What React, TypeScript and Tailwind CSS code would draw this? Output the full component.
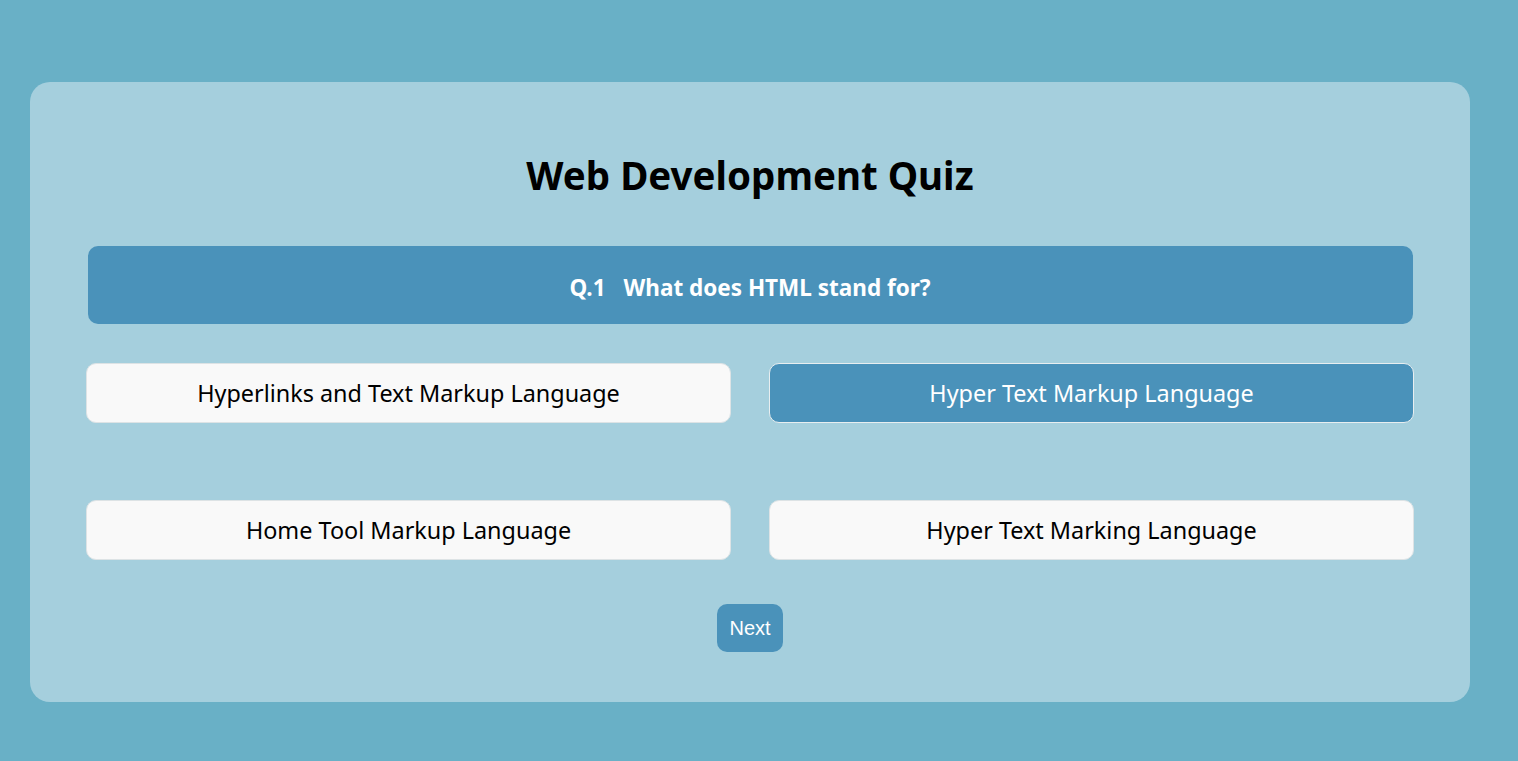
import { useState } from "react";

const options = [
  "Hyperlinks and Text Markup Language",
  "Hyper Text Markup Language",
  "Home Tool Markup Language",
  "Hyper Text Marking Language",
];

export default function App() {
  const [selected, setSelected] = useState(1);

  return (
    <div className="min-h-screen bg-[#69b0c6] pt-[82px] pb-[59px] font-['Noto_Sans',sans-serif]">
      <div className="ml-[30px] w-[1440px] h-[620px] rounded-[20px] bg-[#a5cfdd] px-[56px] pt-[66px] flex flex-col items-center">
        <h1 className="text-[38.5px] leading-[54px] font-bold text-black">Web Development Quiz</h1>

        {/* Question */}
        <div className="mt-[44px] w-[1325px] h-[78px] pt-[5px] rounded-[10px] bg-[#4a92ba] flex items-center justify-center text-white text-[22.5px] font-bold">
          <span>Q.1</span>
          <span className="ml-[18px]">What does HTML stand for?</span>
        </div>

        {/* Options */}
        <div className="mt-[39px] w-full grid grid-cols-2 gap-x-[38px] gap-y-[77px]">
          {options.map((opt, i) => (
            <button
              key={opt}
              onClick={() => setSelected(i)}
              className={
                i === selected
                  ? "h-[60px] pt-[2px] rounded-[10px] border border-[#e8eef0] bg-[#4a92ba] text-white text-[23.4px]"
                  : "h-[60px] pt-[2px] rounded-[10px] border border-[#dde3e5] bg-[#f9f9f9] text-black text-[23.4px]"
              }
            >
              {opt}
            </button>
          ))}
        </div>

        <button className="mt-[44px] w-[66px] h-[48px] rounded-[10px] bg-[#4a92ba] text-white text-[20px] font-['Liberation_Sans',Arial,sans-serif]">
          Next
        </button>
      </div>
    </div>
  );
}
